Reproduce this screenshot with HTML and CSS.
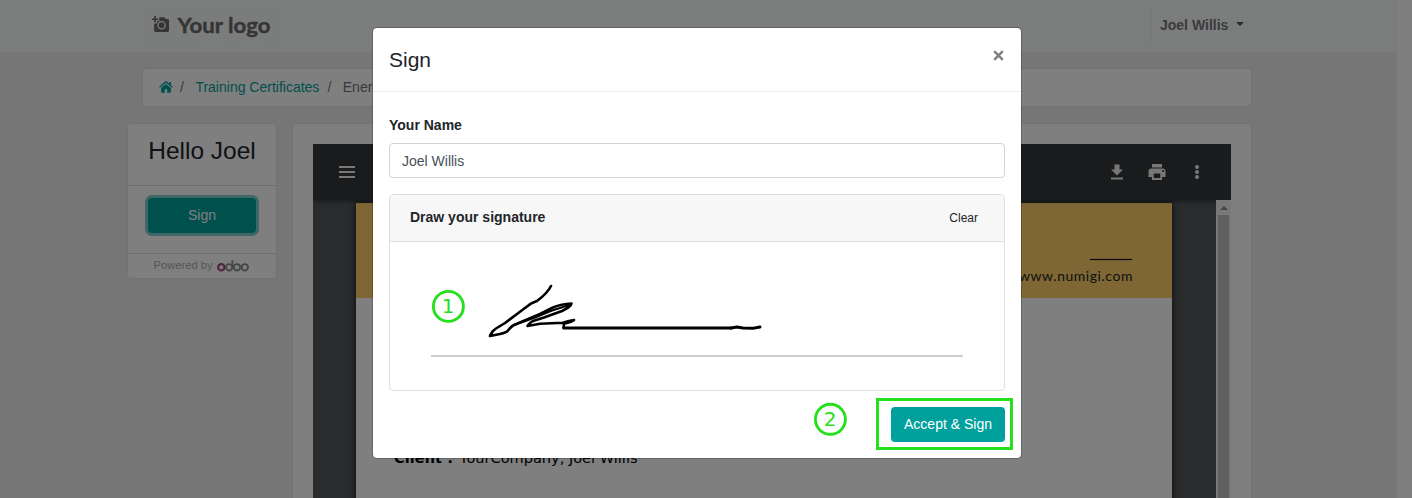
FILE: index.html
```html
<!DOCTYPE html>
<html lang="en">
<head>
<meta charset="utf-8">
<title>Sign</title>
<link rel="stylesheet" href="styles.css">
</head>
<body>
<div class="page">
  <header class="topbar">
    <div class="logo">
      <svg width="18" height="17" viewBox="0 0 18 17"><path fill="#6b6b6b" fill-rule="evenodd" d="M2.300 0h1.600v2.400h2.500V4H3.900v2.400H2.300V4H0V2.400h2.300zM7.300 1.300h5.200l1.300 1.700H15.500c1 0 1.500.5 1.500 1.400v10.200c0 .9-.5 1.400-1.500 1.400H3.600c-1 0-1.500-.5-1.500-1.400V7.500H5V5h2.300zM9.600 5a4.300 4.300 0 1 0 0 8.600a4.300 4.300 0 1 0 0-8.600zm0 1.300a3 3 0 1 1 0 6a3 3 0 1 1 0-6z"/><circle cx="9.600" cy="9.300" r="2" fill="#6b6b6b"/></svg>
      <svg width="98" height="28"><text class="logo-text" x="0.500" y="20.500" textLength="93" lengthAdjust="spacingAndGlyphs">Your logo</text></svg>
    </div>
    <div class="user">Joel Willis<span class="caret"></span></div>
  </header>
  <nav class="crumbs">
    <svg class="home" width="14" height="12" viewBox="0 0 14 12"><path fill="#00a09d" d="M7 3L2.100 7V11c0 .4.2.700.700.700h3V8.300h2.400v3.400h3c.500 0 .700-.3.700-.700V7zM6.200.600L.1 5.700l.8 1L7 1.700l6.100 5 .8-1-2-1.700V1H10v1.400L7.800.600C7.300.2 6.700.2 6.200.600z"/></svg>
    <span class="slash first">/</span><a>Training Certificates</a><span class="slash">/</span><span class="current">Energy</span>
  </nav>
  <main class="columns">
    <aside class="side">
      <h2>Hello Joel</h2>
      <div class="side-action"><button class="btn side-btn">Sign</button></div>
      <div class="powered">Powered by
        <svg width="33" height="13" viewBox="0 0 33 13" fill="none" stroke="#8f8f8f" stroke-width="1.900"><circle cx="4.300" cy="7.300" r="3.200" stroke="#a24689" stroke-width="2.200"/><circle cx="12.200" cy="7.300" r="3.200"/><path d="M15.400 7.300V.3"/><circle cx="20" cy="7.300" r="3.200"/><circle cx="27.800" cy="7.300" r="3.200"/></svg>
      </div>
    </aside>
    <section class="doc">
      <div class="viewer">
        <div class="toolbar">
          <svg width="16" height="12" viewBox="0 0 16 12"><path fill="#f1f1f1" d="M0 0h16v2H0zM0 5h16v2H0zM0 10h16v2H0z"/></svg>
          <div class="tools">
            <svg width="24" height="24" viewBox="0 0 24 24"><path d="M18 9.500h-3.500V4.500h-5v5H6l6 6zM6 17.500v1.900h12v-1.900z"/></svg>
            <svg width="24" height="24" viewBox="0 0 24 24"><path fill-rule="evenodd" d="M17 4H7v3.500h10zM18 8.500H6.500c-1.900 0-3 1.300-3 3V17H7v3h10v-3h3.500v-5.500c0-1.700-1-3-2.500-3zM15.300 18H8.700v-4.500h6.600zM18 12a1 1 0 1 1 0-2a1 1 0 0 1 0 2z"/></svg>
            <svg width="24" height="24" viewBox="0 0 24 24"><circle cx="12" cy="6.900" r="2"/><circle cx="12" cy="12" r="2"/><circle cx="12" cy="17.100" r="2"/></svg>
          </div>
        </div>
        <div class="canvas">
          <div class="sheet">
            <div class="banner">
              <span class="rule"></span>
              <svg width="124" height="24"><text class="site" x="11" y="20.500" textLength="114" lengthAdjust="spacingAndGlyphs">www.numigi.com</text></svg>
            </div>
            <svg class="client" width="300" height="24"><text y="17"><tspan class="strong" x="0" textLength="59">Client :</tspan><tspan x="65.500" textLength="178">YourCompany, Joel Willis</tspan></text></svg>
          </div>
          <div class="scroll"><span class="arrow"></span><span class="thumb"></span></div>
        </div>
      </div>
    </section>
  </main>
</div>
<div class="backdrop">
  <div class="modal">
    <div class="modal-head"><h4>Sign</h4><svg class="close" width="11" height="11" viewBox="0 0 11 11"><path d="M1.200 1.200l8.600 8.600M9.800 1.200L1.200 9.800" stroke="#7f7f7f" stroke-width="2.400"/></svg></div>
    <div class="modal-body">
      <label for="name">Your Name</label>
      <input id="name" class="field" value="Joel Willis">
      <div class="pad">
        <div class="pad-head"><b>Draw your signature</b><span class="clear">Clear</span></div>
        <svg class="pad-area" width="614" height="148" viewBox="390 242 614 148">
          <path d="M431 356h532" stroke="#cdcfce" stroke-width="2"/>
          <g fill="none" stroke="#000" stroke-width="2.600" stroke-linecap="round" stroke-linejoin="round">
            <path d="M551 286C549 290 545 295 537 301C534 302.500 531 303 529 305L517 314L505 323L496 328.500C492 331 491 333 490 336L500 334C505 333 507 332 508 330.500C510 328 511 326.500 514 325L540 314L553 307.500C559 305 565 303.800 571.500 303.500C571 306.500 567 308.500 562 311L544 317.500L533 321C530 322 529 324 527.500 326L540 323.800L563 322.800C567 321 570 320.500 574 320C571 322.500 567 323 564 323.800L563.500 328"/>
            <path d="M514 325L535 317.500L552 310.500L571 304.500" stroke-width="2"/>
            <path d="M564 328H731" stroke-width="3.200"/>
            <path d="M731 328L737 327L743 328L754 328.200L760 327" stroke-width="2.900"/>
          </g>
          <circle cx="448.400" cy="306.400" r="15" fill="none" stroke="#25e01c" stroke-width="2.900"/>
          <text class="step" x="448" y="313">1</text>
        </svg>
      </div>
    </div>
    <div class="modal-foot">
      <svg class="mark" width="34" height="34"><circle cx="17.400" cy="17.300" r="15" fill="none" stroke="#25e01c" stroke-width="2.900"/><text class="step" x="17" y="24">2</text></svg>
      <div class="highlight"><button class="btn accept">Accept &amp; Sign</button></div>
    </div>
  </div>
</div>
</body>
</html>
```
FILE: styles.css
```css
* { box-sizing: border-box; }
body { margin: 0; width: 1412px; height: 498px; overflow: hidden; background: #fff; font: 14px/21px "Liberation Sans", Arial, sans-serif; color: #212529; }
svg { display: block; flex: none; }
h2, h4 { margin: 0; font-weight: 400; }
.page { width: 1397px; height: 498px; overflow: hidden; background: #ececec; }

.topbar { height: 52px; padding: 8px 145px 8px 143px; display: flex; justify-content: space-between; background: #f7faf9; }
.logo { width: 138px; height: 36px; padding: 4px 0 0 9px; display: flex; gap: 7px; background: repeating-linear-gradient(135deg, #f7faf9 0 6px, #f4f7f6 6px 7px); }
.logo > svg:first-child { margin-top: 4px; }
.logo-text { font: 700 21px Lato, sans-serif; fill: #6b6b6b; stroke: #6b6b6b; stroke-width: .4px; }
.user { width: 101px; height: 35px; padding: 7px 0 0 8px; border-left: 1px solid #eceeed; font-weight: 700; color: #777; white-space: nowrap; display: flex; }
.caret { margin: 7px 0 0 8px; width: 8px; height: 4px; border: 4px solid transparent; border-top-color: #555; border-bottom: 0; }

.crumbs { margin: 16px 0 0 142px; width: 1110px; height: 39px; padding: 0 16px; display: flex; align-items: center; background: #fff; border: 1px solid #e2e2e2; border-radius: 4px; color: #6c757d; }
.home { margin-top: -1px; }
.crumbs a { color: #00a09d; }
.slash { margin: 0 11.500px 0 8px; }
.first { margin-left: 7px; }

.columns { display: flex; gap: 15px; padding: 16px 0 0 127px; }
.side { width: 150px; height: 156px; background: #fff; border: 1px solid #e2e2e2; border-radius: 4px; }
.side h2 { height: 62px; padding-top: 11px; text-align: center; font-size: 24.500px; line-height: 32px; border-bottom: 1px solid #dcdcdc; }
.side-action { height: 68px; padding: 12px 20px; border-bottom: 1px solid #dcdcdc; }
.btn { border: 0; border-radius: 4px; background: #00a09d; color: #fff; font: 14px/21px "Liberation Sans", Arial, sans-serif; height: 35px; padding: 0; display: block; }
.side-btn { width: 108px; box-shadow: 0 0 0 3px #80cfce; }
.powered { height: 24px; padding-left: 25.500px; display: flex; gap: 4px; font-size: 11.200px; line-height: 22px; color: #a8adb1; white-space: nowrap; }
.powered svg { margin-top: 6px; }

.doc { width: 960px; height: 400px; padding: 19px 20px; background: #fff; border: 1px solid #e2e2e2; border-radius: 4px; }
.viewer { width: 918px; height: 360px; background: #525659; margin-top: 1px; overflow: hidden; }
.toolbar { position: relative; height: 56px; padding: 0 22px 0 26px; display: flex; align-items: center; justify-content: space-between; background: #323639; box-shadow: 0 1px 4px rgba(0,0,0,.5); }
.tools { display: flex; gap: 16px; fill: #f1f1f1; }
.canvas { height: 304px; padding-left: 43px; display: flex; justify-content: space-between; }
.sheet { width: 816px; height: 301px; margin-top: 3px; background: #fff; box-shadow: 0 0 6px 1px rgba(0,0,0,.6); }
.banner { height: 94.500px; padding: 56px 40px 0 0; display: flex; flex-direction: column; align-items: flex-end; background: #fccf69; }
.banner svg { overflow: visible; }
.rule { width: 42px; height: 1px; background: #111; box-shadow: 0 0 1px #222; }
.site { font: 12.500px Lato, sans-serif; letter-spacing: .5px; fill: #222; }
.client { margin: 148.500px 0 0 38px; font: 14.500px "DejaVu Sans", sans-serif; fill: #000; }
.strong { font-weight: 700; }
.scroll { position: relative; width: 15px; background: #f1f1f1; display: flex; flex-direction: column; align-items: center; }
.arrow { margin-top: 6px; width: 8px; height: 4px; border: 4px solid transparent; border-bottom-color: #8a8a8a; border-top: 0; }
.thumb { width: 11px; margin-top: 5px; flex: 1; background: #c1c1c1; }

.backdrop { position: absolute; inset: 0; padding: 27px 0 0 372px; background: rgba(0,0,0,.5); overflow: hidden; }
.modal { width: 650px; height: 432px; background: #fff; background-clip: padding-box; border: 1px solid rgba(0,0,0,.2); border-radius: 5px; }
.modal-head { height: 64px; padding: 16px 17px 0 16px; display: flex; justify-content: space-between; border-bottom: 1px solid #e9ecef; }
.modal-head h4 { font-size: 21px; line-height: 32px; }
.close { margin-top: 6px; }
.modal-body { padding: 23px 16px 0; }
label { display: block; font-weight: 700; }
.field { display: block; width: 616px; height: 35px; margin-top: 7px; padding: 0 12px; border: 1px solid #ced4da; border-radius: 4px; font: 14px "Liberation Sans", Arial, sans-serif; color: #495057; }
.pad { margin-top: 16px; height: 197px; border: 1px solid #dfdfdf; border-radius: 4px; overflow: hidden; }
.pad-head { height: 47px; padding: 12px 26px 0 20px; display: flex; justify-content: space-between; background: #f7f7f7; border-bottom: 1px solid #dfdfdf; }
.clear { font-size: 12px; line-height: 22px; }
.step { font: 20px "DejaVu Sans", sans-serif; fill: #25e01c; text-anchor: middle; }
.modal-foot { display: flex; justify-content: flex-end; gap: 29px; padding: 7px 8px 0 0; }
.mark { margin-top: 4px; }
.highlight { width: 137px; height: 52px; padding: 6px 5px 0 12px; border: 3px solid #25e01c; }
.accept { width: 114px; }
```
